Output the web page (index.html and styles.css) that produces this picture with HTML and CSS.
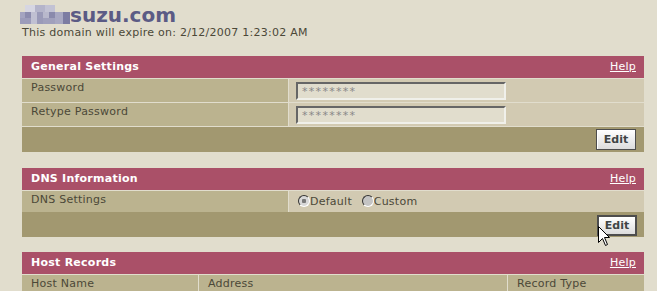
FILE: index.html
```html
<!DOCTYPE html>
<html lang="en">
<head>
  <meta charset="UTF-8">
  <title>Domain Manager</title>
  <link rel="stylesheet" href="styles.css">
</head>
<body>

  <div class="page">
    <div class="domain">
      <svg class="blur" width="50" height="19" viewBox="0 0 50 19">
        <rect x="5" y="0" width="10" height="7" fill="#d6d6e2"/>
        <rect x="15" y="0" width="10" height="7" fill="#b4b4ca"/>
        <rect x="25" y="0" width="10" height="7" fill="#c2c2d4"/>
        <rect x="0" y="7" width="5" height="12" fill="#a4a4c0"/>
        <rect x="5" y="7" width="6" height="12" fill="#8c8cae"/>
        <rect x="11" y="7" width="6" height="12" fill="#c0c0d2"/>
        <rect x="17" y="7" width="6" height="12" fill="#9a9ab8"/>
        <rect x="23" y="7" width="6" height="12" fill="#b8b8cc"/>
        <rect x="29" y="7" width="6" height="12" fill="#8a8aac"/>
        <rect x="35" y="7" width="8" height="12" fill="#a8a8c2"/>
        <rect x="43" y="7" width="7" height="12" fill="#7c7ca2"/>
        <rect x="0" y="13" width="11" height="6" fill="#9c9cba"/>
        <rect x="23" y="13" width="12" height="6" fill="#a0a0bc"/>
      </svg>suzu.com
    </div>
    <div class="expire">This domain will expire on: 2/12/2007 1:23:02 AM</div>

    <div class="panel">
      <div class="panel-head"><span>General Settings</span><a href="#">Help</a></div>
      <div class="rows split lined">
        <div class="label">Password</div>
        <div class="value"><input class="field" type="text" value="********" readonly></div>
        <div class="label">Retype Password</div>
        <div class="value"><input class="field" type="text" value="********" readonly></div>
      </div>
      <div class="panel-foot"><button class="edit">Edit</button></div>
    </div>

    <div class="panel tight">
      <div class="panel-head"><span>DNS Information</span><a href="#">Help</a></div>
      <div class="rows split">
        <div class="label short">DNS Settings</div>
        <div class="value short">
          <span class="radio checked"></span>Default
          <span class="radio"></span>Custom
        </div>
      </div>
      <div class="panel-foot"><button class="edit pressed">Edit</button></div>
    </div>

    <div class="panel">
      <div class="panel-head"><span>Host Records</span><a href="#">Help</a></div>
      <div class="rows hosts">
        <div class="label">Host Name</div>
        <div class="label">Address</div>
        <div class="label">Record Type</div>
      </div>
    </div>
  </div>

  <svg class="cursor" width="13" height="21" viewBox="0 0 13 21">
    <path d="M0.5 0.5 L0.5 16.5 L4.5 12.5 L7.5 19.5 L9.5 18.5 L6.5 11.5 L11.5 11.5 Z" fill="#fff" stroke="#000" stroke-width="1"/>
  </svg>

</body>
</html>
```

FILE: styles.css
```css
body {
  margin: 0;
  background-color: #e1ddcd;
  font-family: "DejaVu Sans", Verdana, sans-serif;
  font-size: 11px;
  letter-spacing: 0.25px;
  color: #4b4838;
  height: 291px;
  overflow: hidden;
}

.page {
  width: 622px;
  padding-left: 22px;
}

.domain {
  padding-top: 4px;
  margin-left: -2px;
  height: 22px;
  line-height: 22px;
  font-size: 20px;
  font-weight: bold;
  letter-spacing: 0;
  color: #5b5b85;
}

.blur {
  vertical-align: -2px;
}

.expire {
  line-height: 14px;
  margin-bottom: 16px;
}

.panel {
  margin-bottom: 16px;
}

.panel.tight {
  margin-bottom: 15px;
}

.panel-head {
  display: flex;
  justify-content: space-between;
  height: 22px;
  line-height: 22px;
  padding: 0 8px 0 9px;
  background: #aa5068;
  color: #fff;
  font-weight: bold;
}

.panel-head a {
  color: #fff;
  font-weight: normal;
}

.rows {
  display: grid;
  gap: 1px;
  padding-top: 1px;
}

.rows.split {
  grid-template-columns: 266px 1fr;
}

.rows.lined {
  padding-bottom: 1px;
}

.rows.hosts {
  grid-template-columns: 176px 308px 1fr;
}

.label {
  height: 23px;
  box-sizing: border-box;
  padding: 2px 9px 0;
  line-height: 14px;
  background: #bbb38f;
}

.value {
  height: 23px;
  box-sizing: border-box;
  padding: 3px 0 0 7px;
  background: #d2cab2;
}

.label.short,
.value.short {
  height: 21px;
}

.value.short {
  padding: 3px 0 0 8px;
  line-height: 16px;
}

.field {
  display: block;
  width: 210px;
  height: 18px;
  box-sizing: border-box;
  margin: 0;
  padding: 0 4px;
  border: 2px solid;
  border-color: #666 #f0f0ea #f0f0ea #666;
  background: #e1ddcd;
  font-family: "DejaVu Sans", Verdana, sans-serif;
  font-size: 11px;
  letter-spacing: 1.3px;
  color: #888;
  outline: none;
}

.radio {
  display: inline-block;
  width: 12px;
  height: 12px;
  box-sizing: border-box;
  border-radius: 50%;
  border: 1px solid;
  border-color: #333 #fff #fff #333;
  background: #c4c4c4;
  vertical-align: -2px;
  margin-left: 1px;
}

.value .radio:nth-of-type(2) {
  margin-left: 6px;
}

.radio.checked {
  background: radial-gradient(circle, #7a7a7a 0 2px, #d8d8d8 2.5px);
}

.panel-foot {
  display: flex;
  justify-content: flex-end;
  align-items: center;
  height: 25px;
  padding-right: 8px;
  background: #a29870;
}

.edit {
  width: 40px;
  height: 21px;
  padding: 0;
  border: 1px solid #4d4d4d;
  background: linear-gradient(#ffffff, #dcdcdc);
  box-shadow: inset 1px 1px 0 #fff;
  font-family: "DejaVu Sans", Verdana, sans-serif;
  font-size: 11px;
  font-weight: bold;
  color: #3f4545;
  cursor: pointer;
}

.edit.pressed {
  margin-right: -1px;
  margin-top: 2px;
  border-width: 2px;
}

.cursor {
  position: absolute;
  left: 598px;
  top: 226px;
}
```
